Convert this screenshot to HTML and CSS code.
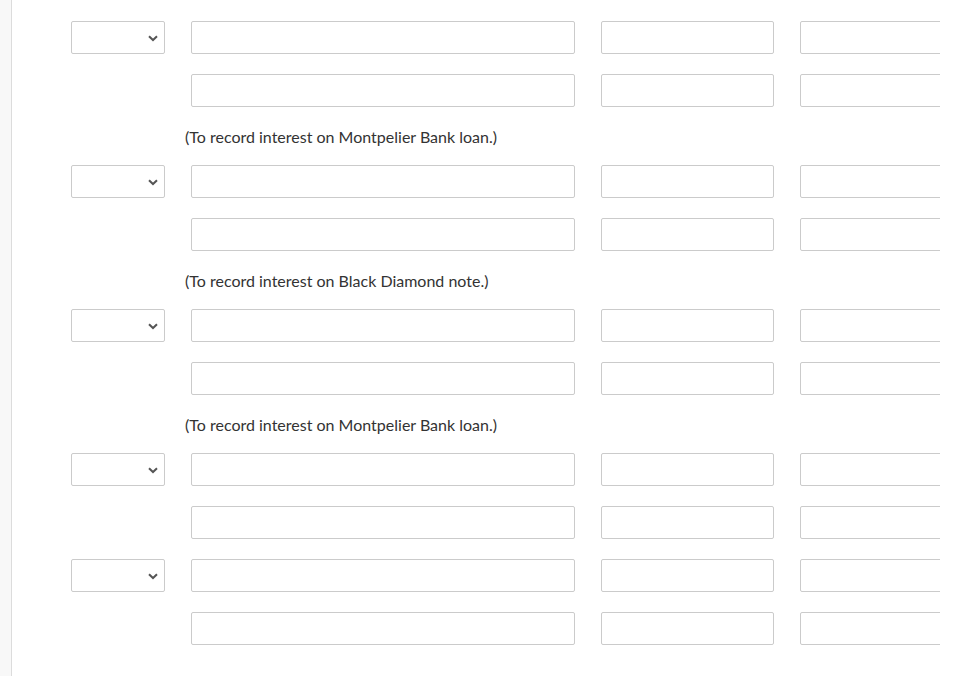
FILE: index.html
```html
<!DOCTYPE html>
<html>
<head>
<meta charset="utf-8">
<link rel="stylesheet" href="styles.css">
</head>
<body>
<div class="page">
  <div class="sidebar"></div>
  <div class="main">
    <div class="row"><div class="select"><svg class="chev" width="10" height="7" viewBox="0 0 10 7"><path d="M1 1.2 L5 5 L9 1.2" fill="none" stroke="#555" stroke-width="2"/></svg></div><div class="input"></div><div class="input"></div><div class="input"></div></div>
    <div class="row"><div></div><div class="input"></div><div class="input"></div><div class="input"></div></div>
    <div class="note">(To record interest on Montpelier Bank loan.)</div>
    <div class="row"><div class="select"><svg class="chev" width="10" height="7" viewBox="0 0 10 7"><path d="M1 1.2 L5 5 L9 1.2" fill="none" stroke="#555" stroke-width="2"/></svg></div><div class="input"></div><div class="input"></div><div class="input"></div></div>
    <div class="row"><div></div><div class="input"></div><div class="input"></div><div class="input"></div></div>
    <div class="note">(To record interest on Black Diamond note.)</div>
    <div class="row"><div class="select"><svg class="chev" width="10" height="7" viewBox="0 0 10 7"><path d="M1 1.2 L5 5 L9 1.2" fill="none" stroke="#555" stroke-width="2"/></svg></div><div class="input"></div><div class="input"></div><div class="input"></div></div>
    <div class="row"><div></div><div class="input"></div><div class="input"></div><div class="input"></div></div>
    <div class="note">(To record interest on Montpelier Bank loan.)</div>
    <div class="row"><div class="select"><svg class="chev" width="10" height="7" viewBox="0 0 10 7"><path d="M1 1.2 L5 5 L9 1.2" fill="none" stroke="#555" stroke-width="2"/></svg></div><div class="input"></div><div class="input"></div><div class="input"></div></div>
    <div class="row"><div></div><div class="input"></div><div class="input"></div><div class="input"></div></div>
    <div class="row"><div class="select"><svg class="chev" width="10" height="7" viewBox="0 0 10 7"><path d="M1 1.2 L5 5 L9 1.2" fill="none" stroke="#555" stroke-width="2"/></svg></div><div class="input"></div><div class="input"></div><div class="input"></div></div>
    <div class="row"><div></div><div class="input"></div><div class="input"></div><div class="input"></div></div>
  </div>
</div>
</body>
</html>
```

FILE: styles.css
```css
html, body {
  margin: 0;
  padding: 0;
  background: #fff;
  font-family: Lato, "Liberation Sans", sans-serif;
}
.page {
  display: flex;
  height: 676px;
  overflow: hidden;
}
.sidebar {
  width: 11px;
  flex: none;
  background: #f8f8f8;
  border-right: 1px solid #dcdcdc;
}
.main {
  width: 928px;
  flex: none;
  overflow: hidden;
  box-sizing: border-box;
  padding: 21px 0 0 59px;
}
.row {
  display: grid;
  grid-template-columns: 94px 384px 173px 220px;
  column-gap: 26px;
  height: 33px;
  margin-bottom: 20px;
}
.select, .input {
  box-sizing: border-box;
  height: 33px;
  border: 1px solid #cbcbcb;
  border-radius: 2px;
  background: #fff;
}
.select {
  display: flex;
  align-items: center;
  justify-content: flex-end;
  padding-right: 6px;
}
.chev {
  display: block;
  margin-top: 1px;
}
.note {
  height: 38px;
  line-height: 20px;
  font-size: 16px;
  color: #333;
  padding-left: 114px;
  white-space: nowrap;
}
```
